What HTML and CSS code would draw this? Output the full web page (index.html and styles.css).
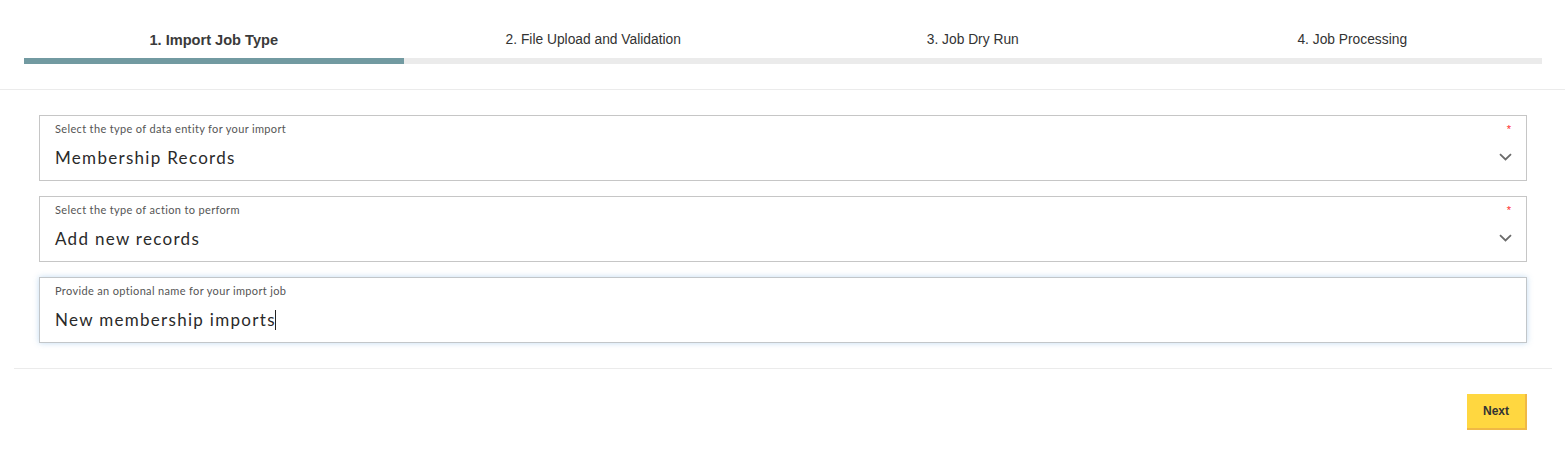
FILE: index.html
```html
<!DOCTYPE html>
<html lang="en">
<head>
    <meta charset="UTF-8">
    <meta name="viewport" content="width=device-width, initial-scale=1.0">
    <title>Import Job</title>
    <link rel="stylesheet" href="styles.css">
</head>
<body>

<div class="header">
    <div class="steps">
        <div class="step active"><span>1. Import Job Type</span></div>
        <div class="step"><span>2. File Upload and Validation</span></div>
        <div class="step"><span>3. Job Dry Run</span></div>
        <div class="step"><span>4. Job Processing</span></div>
    </div>
</div>

<div class="form">
    <div class="field">
        <div class="field-label">Select the type of data entity for your import</div>
        <div class="field-value">Membership Records</div>
        <span class="required">*</span>
        <svg class="chevron" width="13" height="8" viewBox="0 0 13 8">
            <path d="M1 1.2 L6.5 6.5 L12 1.2" fill="none" stroke="#6b6b6b" stroke-width="1.8"/>
        </svg>
    </div>
    <div class="field">
        <div class="field-label">Select the type of action to perform</div>
        <div class="field-value">Add new records</div>
        <span class="required">*</span>
        <svg class="chevron" width="13" height="8" viewBox="0 0 13 8">
            <path d="M1 1.2 L6.5 6.5 L12 1.2" fill="none" stroke="#6b6b6b" stroke-width="1.8"/>
        </svg>
    </div>
    <div class="field focused">
        <div class="field-label">Provide an optional name for your import job</div>
        <div class="field-value">New membership imports<span class="caret"></span></div>
    </div>
</div>

<div class="footer">
    <button class="btn-next">Next</button>
</div>

</body>
</html>
```

FILE: styles.css
```css
body {
    margin: 0;
    font-family: "Liberation Sans", Arial, sans-serif;
    background-color: #fff;
    color: #333;
}
.header {
    height: 89px;
    border-bottom: 1px solid #ebebeb;
    padding: 0 23px 0 24px;
}
.steps {
    display: grid;
    grid-template-columns: repeat(4, 1fr);
}
.step {
    padding-top: 31px;
    text-align: center;
    font-size: 13.8px;
    line-height: 18px;
    color: #333;
}
.step span {
    display: block;
    height: 18px;
}
.step::after {
    content: "";
    display: block;
    height: 6px;
    margin-top: 9px;
    background-color: #ebebeb;
}
.step.active {
    font-size: 14.6px;
    font-weight: bold;
    color: #3a3a3a;
}
.step.active::after {
    background-color: #729aa1;
}
.form {
    padding: 25px 38px 0 39px;
    display: flex;
    flex-direction: column;
    gap: 15px;
}
.field {
    position: relative;
    height: 64px;
    border: 1px solid #c6c6c6;
    padding: 0 15px;
}
.field.focused {
    border-color: #c2c6c9;
    box-shadow: 0 0 6px rgba(120, 175, 225, 0.45);
}
.field-label {
    margin-top: 6px;
    font-family: "Lato", sans-serif;
    font-size: 11px;
    line-height: 14px;
    letter-spacing: 0.35px;
    color: #555;
}
.field-value {
    margin-top: 12px;
    font-family: "Lato", sans-serif;
    font-size: 17px;
    line-height: 20px;
    letter-spacing: 1.3px;
    color: #2a2a2a;
}
.caret {
    display: inline-block;
    width: 1px;
    height: 20px;
    background-color: #222;
    vertical-align: -4px;
    margin-left: -1px;
}
.required {
    position: absolute;
    right: 15px;
    top: 7px;
    color: #ff2b2b;
    font-size: 11px;
}
.chevron {
    position: absolute;
    right: 14px;
    top: 37px;
}
.footer {
    margin: 25px 13px 0 14px;
    border-top: 1px solid #ebebeb;
    padding: 25px 25px 0 0;
    display: flex;
    justify-content: flex-end;
}
.btn-next {
    width: 60px;
    height: 36px;
    background-color: #ffd740;
    border: none;
    border-right: 2px solid #f0b845;
    border-bottom: 2px solid #f0b845;
    font-family: "Liberation Sans", Arial, sans-serif;
    font-weight: bold;
    font-size: 12px;
    color: #333;
    padding: 0;
}
```
